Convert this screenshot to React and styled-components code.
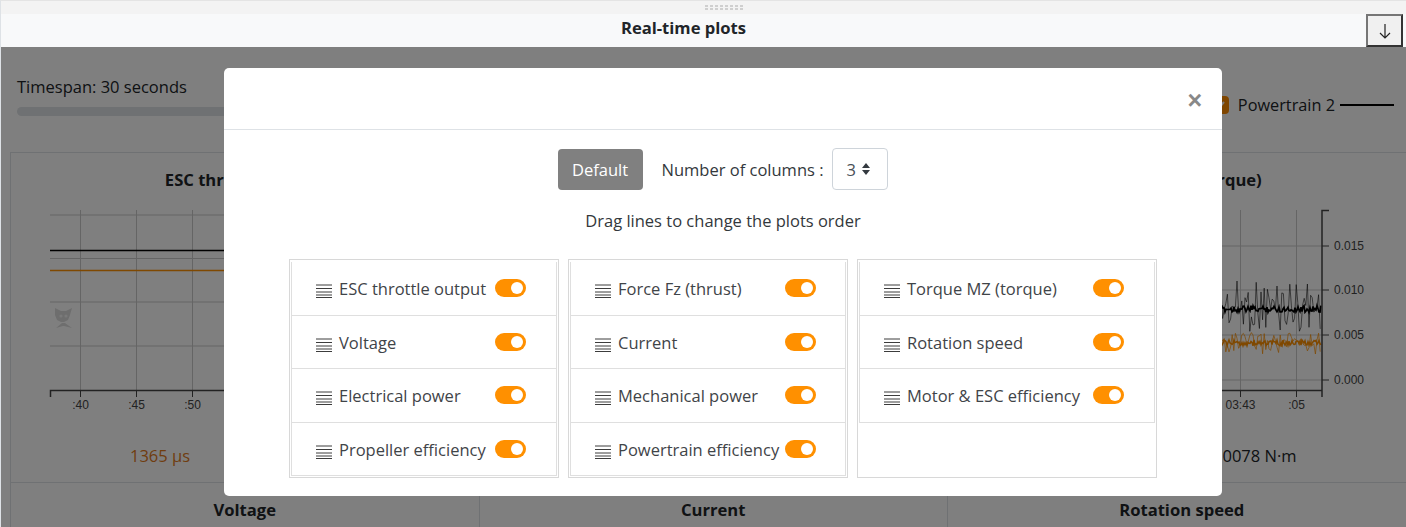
import React from 'react';
import styled, { createGlobalStyle } from 'styled-components';

const GlobalStyle = createGlobalStyle`
  html, body { margin: 0; padding: 0; height: 100%; overflow: hidden; background: #fff; }
  body { font-family: "Open Sans", "Noto Sans", sans-serif; font-size: 16.5px; color: #212529; }
  * { box-sizing: border-box; }
`;

const Panel = styled.div`
  position: relative;
  width: 1406px;
  height: 527px;
  overflow: hidden;
  border-left: 1px solid #dee2e6;
  border-top: 1px solid #e4e4e4;
  background: #fff;
`;

const Handle = styled.div`
  height: 13px;
  background: #f3f3f3;
  display: flex;
  justify-content: center;
  padding: 4px 0 0 42px;
`;

const Dots = styled.div`
  width: 39px;
  height: 6px;
  background-image: linear-gradient(#cfcfcf 2px, transparent 2px);
  background-size: 5px 3px;
  mask-image: linear-gradient(90deg, #000 3px, transparent 3px);
  mask-size: 5px 6px;
`;

const TitleBar = styled.div`
  display: flex;
  height: 33px;
  background: #f8f9fa;
`;

const Title = styled.h1`
  flex: 1;
  margin: 0;
  font-size: 16.6px;
  line-height: 28px;
  font-weight: 700;
  text-align: center;
`;

const CollapseButton = styled.button`
  width: 37px;
  height: 33px;
  margin: 0 3px 0 0;
  padding: 0;
  border: 2px solid;
  border-color: #767676 #333 #333 #767676;
  background: #f0f0f0;
  display: flex;
  align-items: center;
  justify-content: center;
`;

const Content = styled.div`
  padding: 0 0 0 9px;
`;

const Controls = styled.div`
  display: flex;
  justify-content: space-between;
  height: 105px;
  padding: 28px 12px 0 7px;
`;

const Timespan = styled.div`
  width: 600px;
  line-height: 24px;
`;

const Track = styled.div`
  height: 9px;
  margin-top: 8px;
  border-radius: 5px;
  background: #dee2e6;
`;

const Legend = styled.div`
  display: flex;
  align-items: center;
  height: 60px;
`;

const LegendCheck = styled.span`
  width: 18px;
  height: 18px;
  margin-right: 9px;
  border-radius: 4px;
  background: #ff8c00;
  display: flex;
  align-items: center;
  justify-content: center;
`;

const LegendText = styled.span`
  font-size: 16.3px;
`;

const LegendLine = styled.span`
  width: 54px;
  height: 2px;
  margin-left: 5px;
  background: #000;
`;

const PlotGrid = styled.div`
  display: grid;
  grid-template-columns: repeat(3, 468.5px);
  grid-template-rows: 330px 60px;
  width: 1407px;
  border-left: 1px solid #dee2e6;
  border-top: 1px solid #dee2e6;
`;

const PlotCard = styled.div`
  border-right: 1px solid #dee2e6;
  border-bottom: 1px solid #dee2e6;
  display: flex;
  flex-direction: column;
  align-items: center;
  padding-top: 15px;
`;

const PlotTitle = styled.div`
  line-height: 24px;
  font-size: 16.6px;
  font-weight: 700;
`;

const ValueRow = styled.div`
  display: flex;
  width: 100%;
  justify-content: ${(p) => (p.$end ? 'flex-end' : 'flex-start')};
  margin-top: 12px;
  padding: 0 119px;
`;

const PlotValue = styled.span`
  line-height: 24px;
  color: ${(p) => p.$color || '#212529'};
`;

const Backdrop = styled.div`
  position: absolute;
  left: 0;
  right: 0;
  top: 46px;
  bottom: 0;
  background: rgba(0, 0, 0, 0.5);
`;

const Modal = styled.div`
  position: absolute;
  left: 223px;
  top: 67px;
  width: 998px;
  height: 428px;
  background: #fff;
  border-radius: 5px;
`;

const ModalHeader = styled.div`
  height: 62px;
  border-bottom: 1px solid #dee2e6;
  display: flex;
  justify-content: flex-end;
  padding: 18px 20px 0 0;
`;

const CloseMark = styled.span`
  font-size: 25px;
  line-height: 28px;
  font-weight: 700;
  color: #888;
  font-family: "Liberation Sans", sans-serif;
`;

const ModalBody = styled.div`
  display: flex;
  flex-direction: column;
  align-items: center;
  padding-top: 18px;
`;

const OptionsRow = styled.div`
  display: flex;
  align-items: center;
  height: 42px;
`;

const DefaultButton = styled.button`
  width: 85px;
  height: 41px;
  border: 0;
  border-radius: 4px;
  background: #808080;
  color: #fff;
  font: 16.5px "Open Sans", sans-serif;
`;

const ColumnsLabel = styled.span`
  margin-left: 19px;
  color: #33383c;
`;

const ColumnsSelect = styled.div`
  width: 56px;
  height: 42px;
  margin-left: 9px;
  border: 1px solid #ced4da;
  border-radius: 4px;
  display: flex;
  align-items: center;
  gap: 5px;
  padding-left: 13px;
  color: #495057;
`;

const Hint = styled.p`
  margin: 19px 0 0;
  line-height: 24px;
  color: #33383c;
`;

const Columns = styled.div`
  display: grid;
  grid-template-columns: 270px 280px 300px;
  gap: 9px;
  margin-top: 26px;
  align-self: flex-start;
  margin-left: 65px;
`;

const ColumnBox = styled.div`
  width: ${(p) => p.$width}px;
  height: 219px;
  border: 1px solid #d8d8d8;
  padding: 2px 1px 1px;
`;

const Row = styled.div`
  display: flex;
  align-items: center;
  height: 53.5px;
  border: 1px solid #dfdfdf;
  border-top: 0;
  padding: 1px ${(p) => p.$right}px 0 24px;
  color: #3f4448;
`;

const RowLabel = styled.span`
  flex: 1;
  margin-left: 7px;
  white-space: nowrap;
`;

const Grip = styled.svg`
  flex: none;
  margin-top: 5px;
`;

const Switch = styled.span`
  position: relative;
  width: 31px;
  height: 18px;
  border-radius: 9px;
  background: #ff9000;
  flex: none;
  margin-top: -1px;

  &::after {
    content: "";
    position: absolute;
    right: 3px;
    top: 3px;
    width: 12px;
    height: 12px;
    border-radius: 50%;
    background: #fff;
  }
`;

const GripIcon = () => (
  <Grip width="16" height="14" viewBox="0 0 16 14">
    <path d="M0 1h16M0 4.5h16M0 8h16M0 11h16M0 13.5h16" stroke="#3c3c3c" strokeWidth="1" fill="none" />
  </Grip>
);

const SortCaret = () => (
  <svg width="10" height="14" viewBox="0 0 10 14">
    <path d="M5 1l4 5H1zM5 13l4-5H1z" fill="#343a40" />
  </svg>
);

const GRID = '#cacaca';
const AXIS = '#444';
const LABEL = { fontSize: 12, fontFamily: 'Liberation Sans', fill: '#444' };

const gridX = [80.5, 136.5, 192.5, 248.5, 304.5, 360.5, 416.5];
const gridY = [215, 258.5, 302, 346];

const ThrottlePlot = () => (
  <svg width="468" height="240" viewBox="11 192 468 240">
    {gridY.map((y) => <path key={y} d={`M50 ${y}H470`} stroke={GRID} />)}
    {gridX.map((x) => <path key={x} d={`M${x} 210V390`} stroke={GRID} />)}
    <path d="M50 250.5H470" stroke="#000" strokeWidth="1.5" />
    <path d="M50 270.5H470" stroke="#ff9000" strokeWidth="1.5" />
    <path d="M50.5 397V390.5H470" stroke={AXIS} strokeWidth="1.5" fill="none" />
    {[80.5, 136.5, 192.5].map((x) => <path key={x} d={`M${x} 390V397`} stroke={AXIS} />)}
    {[[80.5, ':40'], [136.5, ':45'], [192.5, ':50']].map(([x, t]) => (
      <text key={t} x={x} y="409" textAnchor="middle" {...LABEL}>{t}</text>
    ))}
    <g fill="#dcdcdc">
      <path d="M55 308l6 3h5l6-3-2 7-2 5-4 2-3 0-4-2-2-5z" />
      <path d="M56 328l6-5h3l7 5-8-2h-1z" />
    </g>
    <circle cx="61" cy="316" r="1.6" fill="#f4f4f4" />
    <circle cx="66" cy="316" r="1.6" fill="#f4f4f4" />
  </svg>
);

// fixed pseudo noise so the trace looks the same on every load
const noise = (i, seed) => {
  const v = Math.sin(i * 12.9898 + seed * 78.233) * 43758.5453;
  return v - Math.floor(v) - 0.5;
};

const trace = (base, amp, seed, step) => {
  let d = '';
  for (let i = 0; i * step <= 100; i += 1) {
    d += `${i ? 'L' : 'M'}${1222 + i * step} ${(base + noise(i, seed) * amp).toFixed(1)}`;
  }
  return d;
};

const torqueYs = [246, 290, 335, 380];

const TorquePlot = () => (
  <svg width="468" height="240" viewBox="949 192 468 240">
    {torqueYs.map((y) => <path key={y} d={`M949 ${y}H1323`} stroke={GRID} />)}
    {[1241.5, 1297.5].map((x) => <path key={x} d={`M${x} 210V390`} stroke={GRID} />)}
    <path d={trace(306, 52, 1, 1.6)} fill="none" stroke="#000" strokeWidth="1" opacity="0.55" />
    <path d={trace(309, 7, 2, 1)} fill="none" stroke="#000" strokeWidth="1.7" />
    <path d={trace(343, 22, 3, 1.6)} fill="none" stroke="#ff9000" strokeWidth="1" opacity="0.7" />
    <path d={trace(343, 6, 4, 1)} fill="none" stroke="#ff9000" strokeWidth="1.5" />
    <path d="M949 390.5H1323M1330 210.5H1323V397" fill="none" stroke={AXIS} strokeWidth="1.5" />
    {torqueYs.map((y) => <path key={y} d={`M1323 ${y}h7`} stroke={AXIS} />)}
    {[1241.5, 1297.5].map((x) => <path key={x} d={`M${x} 390v7`} stroke={AXIS} />)}
    {[['0.015', 250], ['0.010', 294], ['0.005', 339], ['0.000', 384]].map(([t, y]) => (
      <text key={t} x="1335" y={y} {...LABEL}>{t}</text>
    ))}
    {[[1241.5, '03:43'], [1297.5, ':05']].map(([x, t]) => (
      <text key={t} x={x} y="409" textAnchor="middle" {...LABEL}>{t}</text>
    ))}
  </svg>
);

const columns = [
  { width: 270, right: 30, rows: ['ESC throttle output', 'Voltage', 'Electrical power', 'Propeller efficiency'] },
  { width: 280, right: 29, rows: ['Force Fz (thrust)', 'Current', 'Mechanical power', 'Powertrain efficiency'] },
  { width: 300, right: 30, rows: ['Torque MZ (torque)', 'Rotation speed', 'Motor & ESC efficiency'] },
];

const App = () => (
  <>
    <GlobalStyle />
    <Panel>
      <Handle><Dots /></Handle>
      <TitleBar>
        <Title>Real-time plots</Title>
        <CollapseButton>
          <svg width="14" height="16" viewBox="0 0 14 16">
            <path d="M7 1v14M2 10l5 5 5-5" fill="none" stroke="#222" strokeWidth="1.2" />
          </svg>
        </CollapseButton>
      </TitleBar>
      <Content>
        <Controls>
          <Timespan>
            Timespan: 30 seconds
            <Track />
          </Timespan>
          <Legend>
            <LegendCheck>
              <svg width="12" height="12" viewBox="0 0 12 12">
                <path d="M2 6l3 3 5-6" fill="none" stroke="#fff" strokeWidth="2" />
              </svg>
            </LegendCheck>
            <LegendText>Powertrain 2</LegendText>
            <LegendLine />
          </Legend>
        </Controls>
        <PlotGrid>
          <PlotCard>
            <PlotTitle>ESC throttle output</PlotTitle>
            <ThrottlePlot />
            <ValueRow><PlotValue $color="#e07a1c">1365 µs</PlotValue></ValueRow>
          </PlotCard>
          <PlotCard />
          <PlotCard>
            <PlotTitle>Torque MZ (torque)</PlotTitle>
            <TorquePlot />
            <ValueRow $end><PlotValue>0.0078 N·m</PlotValue></ValueRow>
          </PlotCard>
          <PlotCard><PlotTitle>Voltage</PlotTitle></PlotCard>
          <PlotCard><PlotTitle>Current</PlotTitle></PlotCard>
          <PlotCard><PlotTitle>Rotation speed</PlotTitle></PlotCard>
        </PlotGrid>
      </Content>
      <Backdrop />
      <Modal>
        <ModalHeader><CloseMark>×</CloseMark></ModalHeader>
        <ModalBody>
          <OptionsRow>
            <DefaultButton>Default</DefaultButton>
            <ColumnsLabel>Number of columns :</ColumnsLabel>
            <ColumnsSelect>3 <SortCaret /></ColumnsSelect>
          </OptionsRow>
          <Hint>Drag lines to change the plots order</Hint>
          <Columns>
            {columns.map((col) => (
              <ColumnBox key={col.width} $width={col.width}>
                {col.rows.map((name) => (
                  <Row key={name} $right={col.right}>
                    <GripIcon />
                    <RowLabel>{name}</RowLabel>
                    <Switch />
                  </Row>
                ))}
              </ColumnBox>
            ))}
          </Columns>
        </ModalBody>
      </Modal>
    </Panel>
  </>
);

export default App;
